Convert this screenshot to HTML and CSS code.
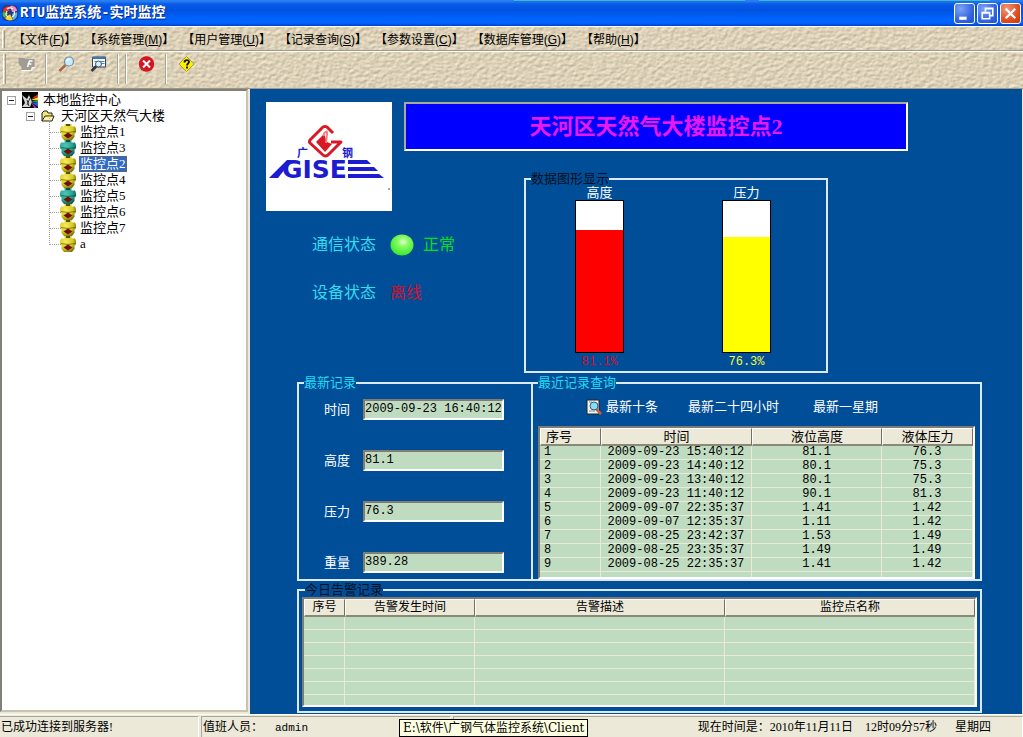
FILE: index.html
```html
<!DOCTYPE html>
<html lang="zh-CN">
<head>
<meta charset="utf-8">
<title>RTU监控系统-实时监控</title>
<link rel="stylesheet" href="styles.css">
</head>
<body>
<svg class="defs" width="0" height="0" aria-hidden="true">
  <defs>
    <radialGradient id="pot-y" cx="35%" cy="35%" r="75%"><stop offset="0" stop-color="#f6ee5a"/><stop offset=".6" stop-color="#d8c820"/><stop offset="1" stop-color="#6e6408"/></radialGradient>
    <radialGradient id="pot-t" cx="35%" cy="35%" r="75%"><stop offset="0" stop-color="#4cc8b4"/><stop offset=".6" stop-color="#25a08e"/><stop offset="1" stop-color="#0c5048"/></radialGradient>
    <symbol id="station" viewBox="0 0 16 16">
      <path d="M4.500 0h7v2.500H15L16 5v3.500l-1.500 1V13L12 16H4l-2.500-3V9.500L0 8.500V5l1-2.500h3.500z"/>
      <path d="M6 1h4" stroke="#222" stroke-width="1.500"/>
      <path d="M1 7.500q7 2 14 0" fill="none" stroke="#0006" stroke-width="1"/>
      <path d="M3.500 11.500L8 8.500l4.500 3L8 14.500z" fill="#6e1208"/>
    </symbol>
  </defs>
</svg>
<div class="window">
  <header class="title-bar">
    <div class="tab-edges"><span></span><span></span></div>
    <svg class="app-icon" viewBox="0 0 16 16">
      <rect width="16" height="16" rx="5" fill="#243a78"/>
      <path d="M1 7C1 3 5 0 8 2L7 6z" fill="#e83828"/><path d="M8 1c4-1 7 2 7 5l-5 1z" fill="#f08ac8"/>
      <path d="M15 7c1 4-1 7-4 8l-1-6z" fill="#58b8f0"/><path d="M11 15c-4 1-7 0-8-2l5-4z" fill="#f8d428"/>
      <path d="M3 13C1 12 0 10 1 7l5 1z" fill="#48c048"/><path d="M5 4c2-2 5-1 6 0M12 6c1 3 0 5-2 6M6 12C3 10 4 8 5 6" fill="none" stroke="#fff" stroke-width="1.200"/>
      <circle cx="8" cy="8" r="1.500" fill="#2038a0"/>
    </svg>
    <h1 class="title">RTU监控系统-实时监控</h1>
    <button class="win-btn" type="button" aria-label="最小化"><svg viewBox="0 0 18 18"><path d="M4 12h7v3H4z" fill="#fff"/></svg></button>
    <button class="win-btn" type="button" aria-label="还原"><svg viewBox="0 0 18 18"><path d="M7 7V4h7v7h-3M4 8h7v6H4zM4 8.500h7M7 4.500h7" fill="none" stroke="#fff" stroke-width="1.500"/></svg></button>
    <button class="win-btn win-close" type="button" aria-label="关闭"><svg viewBox="0 0 18 18"><path d="M4.500 4.500l9 9M13.500 4.500l-9 9" stroke="#fff" stroke-width="2.200"/></svg></button>
  </header>

  <div class="bars">
    <svg class="texture" width="100%" height="100%" aria-hidden="true">
      <filter id="emboss" x="0" y="0" width="100%" height="100%" color-interpolation-filters="sRGB">
        <feTurbulence type="fractalNoise" baseFrequency=".22 .3" numOctaves="2" seed="4"/>
        <feDiffuseLighting surfaceScale=".5" diffuseConstant="1.180" lighting-color="#e4d8be"><feDistantLight azimuth="235" elevation="55"/></feDiffuseLighting>
      </filter>
      <rect width="100%" height="100%" filter="url(#emboss)"/>
    </svg>
    <nav class="menu-bar">
      <span class="grip"></span>
      <button type="button">【文件(<u>F</u>)】</button>
      <button type="button">【系统管理(<u>M</u>)】</button>
      <button type="button">【用户管理(<u>U</u>)】</button>
      <button type="button">【记录查询(<u>S</u>)】</button>
      <button type="button">【参数设置(<u>C</u>)】</button>
      <button type="button">【数据库管理(<u>G</u>)】</button>
      <button type="button">【帮助(<u>H</u>)】</button>
    </nav>
    <div class="tool-bar">
      <span class="grip"></span>
      <button type="button" aria-label="登录" disabled><svg viewBox="0 0 16 16"><path d="M0 2h6l1 1h9v8h-3l-1 3H3v-3l-3-3z" fill="#a09c94"/><path d="M3 14.500h10l1-3h2" fill="none" stroke="#fff"/><path d="M9 11l2-6h3M9 8h4" fill="none" stroke="#fff" stroke-width="1.500"/></svg></button>
      <span class="sep"></span>
      <button type="button" aria-label="查询"><svg viewBox="0 0 16 16"><path d="M7 9l-6 6" stroke="#a8683c" stroke-width="2.500"/><circle cx="10.500" cy="5.500" r="4.500" fill="#c8ecfc" stroke="#6c8cac" stroke-width="1.200"/><path d="M8 5a3 3 0 0 1 3-2" fill="none" stroke="#fff" stroke-width="1.500"/></svg></button>
      <button type="button" aria-label="记录查询"><svg viewBox="0 0 16 16"><path d="M2 1h13v10H2z" fill="#f2f8fc" stroke="#34465c"/><path d="M2 1h13v2H2z" fill="#3c78b0"/><path d="M4 5.500h10M10 7.500h4" stroke="#6488a8"/><path d="M6 10l-5 5" stroke="#33333b" stroke-width="2.500"/><circle cx="8" cy="8" r="3" fill="#d4f0fc" stroke="#445668"/></svg></button>
      <span class="sep"></span><span class="sep"></span>
      <button type="button" aria-label="退出"><svg viewBox="0 0 16 16"><circle cx="8" cy="8" r="7.700" fill="#d41420"/><path d="M4.500 4.500l7 7M11.500 4.500l-7 7" stroke="#fff" stroke-width="2"/></svg></button>
      <span class="sep"></span>
      <button type="button" aria-label="帮助"><svg viewBox="0 0 16 16"><path d="M8 .5L15.500 8 8 15.500.5 8z" fill="#fcf008" stroke="#b0a020"/><path d="M6 6.500c0-3 4.500-3 4.500-.5C10.500 7.500 8.500 7.500 8.500 9.500M8.500 10.500v2" fill="none" stroke="#111" stroke-width="1.800"/></svg></button>
    </div>
  </div>

  <main class="main">
    <aside class="tree-pane">
      <ul class="tree">
        <li>
          <div class="node"><button class="expander" type="button" aria-label="折叠"></button><svg class="icon root-icon" viewBox="0 0 16 16"><path d="M0 0h16v16H0z" fill="#000"/><path d="M0 3l5 4 2-4 3 7-2 5H0l3-4z" fill="#d4d4d4"/><path d="M5 8l2 6M8 6l-3 7" stroke="#333"/><path d="M9 7l7-5v3z" fill="#e82818"/><path d="M9 8l7-3v3z" fill="#f8d020"/><path d="M9 9l7-1v3z" fill="#30a840"/><path d="M9 10l7 1v4z" fill="#3058e0"/><path d="M9 10l6 6h-3z" fill="#a030c0"/></svg><span class="label">本地监控中心</span></div>
          <ul>
            <li>
              <div class="node"><button class="expander" type="button" aria-label="折叠"></button><svg class="icon" viewBox="0 0 16 16"><path d="M1 13V5l2-2h3l1 2h4v3" fill="#f4e878" stroke="#222"/><path d="M1 13l3-5h9l-2 5z" fill="#fcf4a0" stroke="#222"/></svg><span class="label">天河区天然气大楼</span></div>
              <ul class="stations">
                <li class="node"><svg class="icon" fill="url(#pot-y)"><use href="#station"/></svg><span class="label">监控点1</span></li>
                <li class="node"><svg class="icon" fill="url(#pot-t)"><use href="#station"/></svg><span class="label">监控点3</span></li>
                <li class="node"><svg class="icon" fill="url(#pot-y)"><use href="#station"/></svg><span class="label selected">监控点2</span></li>
                <li class="node"><svg class="icon" fill="url(#pot-y)"><use href="#station"/></svg><span class="label">监控点4</span></li>
                <li class="node"><svg class="icon" fill="url(#pot-t)"><use href="#station"/></svg><span class="label">监控点5</span></li>
                <li class="node"><svg class="icon" fill="url(#pot-y)"><use href="#station"/></svg><span class="label">监控点6</span></li>
                <li class="node"><svg class="icon" fill="url(#pot-y)"><use href="#station"/></svg><span class="label">监控点7</span></li>
                <li class="node"><svg class="icon" fill="url(#pot-y)"><use href="#station"/></svg><span class="label">a</span></li>
              </ul>
            </li>
          </ul>
        </li>
      </ul>
    </aside>

    <section class="panel">
      <div class="overview">
        <svg class="logo" viewBox="0 0 126 109" role="img" aria-label="广钢 GISE">
          <path fill="#fff" d="M0 0h126v109H0z"/>
          <path d="M67 31L61 25Q59 24 57 25L44 38Q43 40 44 41L57 53Q59 55 62 53L75 40H65" fill="none" stroke="#d81824" stroke-width="3" stroke-linejoin="round"/>
          <path d="M50 40l8-8 3 8 5 2-7 8z" fill="#d81824"/><path d="M57 34c2-6 5-5 4-2l-1 9" fill="none" stroke="#f08080" stroke-width="2"/>
          <text class="logo-cn" x="31" y="55">广</text><text class="logo-cn" x="76" y="55">钢</text>
          <path d="M3 76L21 58h5L12 76z" fill="#1c1cd0"/>
          <text class="logo-en" x="16" y="76">GISE</text>
          <path d="M82 58h19l4 4H82zM82 65h26l4 4H82zM82 72h31l5 4H82z" fill="#1c1cd0"/>
          <path d="M122 87h2" stroke="#555"/>
        </svg>
        <h2 class="banner">天河区天然气大楼监控点2</h2>
        <div class="states">
          <span class="state-name">通信状态</span>
          <svg class="lamp" viewBox="0 0 24 24"><defs><radialGradient id="lamp" cx="55%" cy="35%" r="60%"><stop offset="0" stop-color="#e8ffd8"/><stop offset=".35" stop-color="#8cfc68"/><stop offset="1" stop-color="#40ec30"/></radialGradient></defs><ellipse cx="12" cy="12" rx="11.500" ry="10.500" fill="url(#lamp)"/></svg>
          <span class="ok">正常</span>
          <span class="state-name">设备状态</span>
          <span class="bad">离线</span>
        </div>
        <fieldset class="charts">
          <legend>数据图形显示</legend>
          <div class="gauges">
            <div class="gauge"><span>高度</span><div class="tube"><div class="fill red" style="height:81.1%"></div></div><span class="pct-red">81.1%</span></div>
            <div class="gauge"><span>压力</span><div class="tube"><div class="fill yellow" style="height:76.3%"></div></div><span class="pct-yellow">76.3%</span></div>
          </div>
        </fieldset>
      </div>

      <div class="records">
        <fieldset class="latest">
          <legend class="cyan">最新记录</legend>
          <div class="fields">
            <label for="f-time">时间</label><input id="f-time" type="text" value="2009-09-23 16:40:12" readonly>
            <label for="f-height">高度</label><input id="f-height" type="text" value="81.1" readonly>
            <label for="f-press">压力</label><input id="f-press" type="text" value="76.3" readonly>
            <label for="f-weight">重量</label><input id="f-weight" type="text" value="389.28" readonly>
          </div>
        </fieldset>
        <fieldset class="recent">
          <legend class="cyan">最近记录查询</legend>
          <div class="queries">
            <button type="button"><svg viewBox="0 0 16 16"><path d="M1 1h12v14H1z" fill="#f4f4f4" stroke="#222"/><path d="M3 12h6M3 3h3" stroke="#889"/><path d="M10 10l5 5" stroke="#d0603c" stroke-width="2.500"/><circle cx="8" cy="7" r="4" fill="#88dcf4" stroke="#34607c"/></svg>最新十条</button>
            <button type="button">最新二十四小时</button>
            <button type="button">最新一星期</button>
          </div>
          <div class="sheet">
            <table class="grid recent-grid">
              <colgroup><col class="c-no"><col class="c-time"><col class="c-h"><col class="c-p"></colgroup>
              <thead><tr><th class="first">序号</th><th>时间</th><th>液位高度</th><th>液体压力</th></tr></thead>
              <tbody>
                <tr><td>1</td><td>2009-09-23 15:40:12</td><td>81.1</td><td>76.3</td></tr>
                <tr><td>2</td><td>2009-09-23 14:40:12</td><td>80.1</td><td>75.3</td></tr>
                <tr><td>3</td><td>2009-09-23 13:40:12</td><td>80.1</td><td>75.3</td></tr>
                <tr><td>4</td><td>2009-09-23 11:40:12</td><td>90.1</td><td>81.3</td></tr>
                <tr><td>5</td><td>2009-09-07 22:35:37</td><td>1.41</td><td>1.42</td></tr>
                <tr><td>6</td><td>2009-09-07 12:35:37</td><td>1.11</td><td>1.42</td></tr>
                <tr><td>7</td><td>2009-08-25 23:42:37</td><td>1.53</td><td>1.49</td></tr>
                <tr><td>8</td><td>2009-08-25 23:35:37</td><td>1.49</td><td>1.49</td></tr>
                <tr><td>9</td><td>2009-08-25 22:35:37</td><td>1.41</td><td>1.42</td></tr>
                <tr class="tail"><td></td><td></td><td></td><td></td></tr>
              </tbody>
            </table>
          </div>
        </fieldset>
      </div>

      <fieldset class="alarms">
        <legend>今日告警记录</legend>
        <div class="sheet">
          <table class="grid alarm-grid">
            <colgroup><col class="a-no"><col class="a-time"><col class="a-desc"><col class="a-name"></colgroup>
            <thead><tr><th>序号</th><th>告警发生时间</th><th>告警描述</th><th>监控点名称</th></tr></thead>
            <tbody>
              <tr><td></td><td></td><td></td><td></td></tr>
              <tr><td></td><td></td><td></td><td></td></tr>
              <tr><td></td><td></td><td></td><td></td></tr>
              <tr><td></td><td></td><td></td><td></td></tr>
              <tr><td></td><td></td><td></td><td></td></tr>
              <tr><td></td><td></td><td></td><td></td></tr>
              <tr class="tail"><td></td><td></td><td></td><td></td></tr>
            </tbody>
          </table>
        </div>
      </fieldset>
    </section>
  </main>

  <footer class="status-bar">
    <div class="cell link">已成功连接到服务器!</div>
    <div class="cell duty"><span>值班人员：</span><span class="mono">admin</span></div>
    <div class="cell clock"><span>现在时间是：2010年11月11日</span><span>12时09分57秒</span><span class="weekday">星期四</span></div>
    <div class="tip" role="tooltip">E:\软件\广钢气体监控系统\Client</div>
  </footer>
</div>
</body>
</html>
```
FILE: styles.css
```css
* { box-sizing: border-box; }
body {
  margin: 0;
  font: 12px/14px "Liberation Serif", "Noto Sans CJK SC", sans-serif;
  color: #000;
  background: #ece9d8;
}
button { font: inherit; color: inherit; border: 0; padding: 0; background: none; }
ul { list-style: none; margin: 0; padding: 0; }
.defs { position: absolute; }
.window { min-height: 100vh; display: flex; flex-direction: column; }

/* title bar */
.title-bar {
  position: relative;
  display: flex; align-items: center; gap: 2px;
  height: 26px; padding: 0 2px;
  background: linear-gradient(#2a80f0 0, #2a80f0 1px, #0a5ae8 4px, #0052e0 10px, #0062fc 18px, #0064ff 23px, #0040c8 26px);
}
.tab-edges { position: absolute; top: 0; right: 33px; width: 476px; display: flex; gap: 14px; }
.tab-edges span { flex: 1; height: 2px; background: #3cb4f0; border-bottom: 1px solid #1878c8; }
.app-icon { width: 16px; height: 16px; }
.title { flex: 1; margin: 0; color: #fff; font: bold 14px/20px "Liberation Mono", "Noto Sans CJK SC", monospace; text-shadow: 1px 1px 0 #0a2a80; }
.win-btn { width: 21px; height: 21px; border: 1px solid #fff; border-radius: 3px; background: radial-gradient(circle at 30% 25%, #7ea4f4, #3464e0 60%, #2450cc); }
.win-btn svg { display: block; width: 19px; height: 19px; }
.win-close { background: radial-gradient(circle at 30% 25%, #f09878, #e04c20 60%, #c83810); }

/* menu and tool bars */
.bars { position: relative; background: #dfd2ba; }
.texture { position: absolute; inset: 0; }
.menu-bar, .tool-bar { position: relative; display: flex; border-top: 1px solid #fff; border-bottom: 1px solid #9c9888; }
.menu-bar { height: 25px; padding: 2px 0 0 2px; gap: 8px; align-items: center; font-family: "Liberation Sans", "Noto Sans CJK SC", sans-serif; white-space: nowrap; }
.tool-bar { height: 38px; padding: 2px 3px 4px; }
.grip { width: 3px; border-left: 1px solid #fff; border-right: 1px solid #9c9888; align-self: stretch; }
.menu-bar .grip { height: 17px; align-self: center; }
.tool-bar .grip { margin-right: 4px; }
.tool-bar button { width: 32px; height: 20px; display: flex; justify-content: center; align-items: center; }
.tool-bar svg { width: 17px; height: 16px; }
.sep { width: 2px; margin: 0 3px; border-left: 1px solid #a8a290; border-right: 1px solid #fff; }

/* main area */
.main { flex: 1; display: flex; gap: 2px; }
.tree-pane { width: 248px; flex: none; padding: 1px 0; background: #fff; border: 2px solid #808074; border-right-color: #c8c4b0; border-bottom-color: #c8c4b0; margin-bottom: 2px; }
.tree { padding-left: 5px; font-size: 13px; line-height: 16px; }
.tree ul { padding-left: 19px; }
.node { display: flex; align-items: center; height: 16px; }
.expander { width: 9px; height: 9px; margin-right: 6px; border: 1px solid #a0a0a0; background: linear-gradient(#222, #222) center / 5px 1px no-repeat #fff; }
.icon { width: 16px; height: 16px; flex: none; margin-right: 3px; }
.root-icon { margin-right: 4px; }
.label { padding: 0 1px; line-height: 16px; }
.selected { background: #316ac5; color: #fff; outline: 1px dotted #806030; outline-offset: -1px; }
.tree .stations { padding-left: 34px; }
.stations .node { position: relative; }
.stations .node::before { content: ""; position: absolute; left: -11px; top: -8px; width: 11px; height: 16px; border-left: 1px dotted #a0a0a0; border-bottom: 1px dotted #a0a0a0; }

.panel { flex: 1; min-width: 0; padding: 13px 40px 0 16px; margin-right: 1px; background: #004e98; }
.overview { display: grid; grid-template-columns: 138px 120px 1fr; grid-template-rows: 70px 39px auto; }
.logo { grid-area: 1 / 1 / 3 / 2; width: 126px; height: 109px; }
.logo-cn { font: bold 11px "Noto Sans CJK SC", sans-serif; fill: #1c1cd0; }
.logo-en { font: bold 25px "DejaVu Sans", sans-serif; fill: #1c1cd0; }
.banner {
  grid-area: 1 / 2 / 2 / 4; align-self: start;
  margin: 0 74px 0 0; padding: 11px 0 10px; border: 2px solid #aca8a0; border-right-color: #fff; border-bottom-color: #fff;
  background: #00f; color: #e818f0; text-align: center;
  font: bold 22px/24px "Liberation Serif", "Noto Sans CJK SC", sans-serif;
}
.states {
  grid-area: 3 / 1 / 4 / 3; align-self: start;
  display: grid; grid-template-columns: 64px 24px auto; column-gap: 14px; row-gap: 24px; align-items: center;
  padding: 22px 0 0 46px; font-size: 16px; line-height: 24px;
}
.state-name { color: #30dcf0; }
.lamp { width: 24px; height: 24px; }
.ok { color: #00e020; margin-left: -5px; }
.bad { color: #d0102c; grid-column: 2 / 4; }

fieldset { min-width: 0; margin: 0; padding: 0; border: 2px solid #dce8f4; }
legend { padding: 0; margin-left: 5px; font-size: 13px; line-height: 14px; color: #001020; }
.cyan { color: #20dcf4; }

.charts { grid-area: 2 / 3 / 4 / 4; width: 66%; min-width: 304px; padding: 0 6px 2px 0; color: #fff; }
.gauges { display: flex; justify-content: space-around; }
.gauge { width: 49px; display: flex; flex-direction: column; font-size: 13px; line-height: 14px; text-align: center; }
.tube { height: 153px; border: 1px solid #000; background: #fff; display: flex; align-items: flex-end; margin-bottom: 2px; }
.fill { width: 100%; }
.red { background: #f00; }
.yellow { background: #ff0; }
.pct-red, .pct-yellow { font: 12px/14px "Liberation Mono", monospace; }
.pct-red { color: #d0102c; }
.pct-yellow { color: #f4fc40; }

.records { display: flex; margin: 3px 0 0 31px; }
.latest { flex: 234 0 234px; border-right: 0; }
.fields { display: grid; grid-template-columns: 26px 1fr; column-gap: 13px; row-gap: 30px; align-items: center; padding: 9px 27px 6px 25px; color: #fff; font-size: 13px; }
.fields input {
  width: 100%; height: 21px; padding: 0 0 2px 0; border: 2px solid #807c74; border-right-color: #fff; border-bottom-color: #fff;
  background: #c0dcc0; color: #000; font: 12px/14px "Liberation Mono", monospace;
}
.recent { flex: 451 1 451px; padding: 9px 5px 0; }
.recent legend { margin-left: 0; }
.queries { display: flex; align-items: center; height: 16px; margin-bottom: 11px; padding-left: 48px; gap: 30px; color: #fff; font-size: 13px; }
.queries button { display: flex; align-items: center; gap: 4px; white-space: nowrap; }
.queries button:last-child { margin-left: 4px; }
.queries svg { width: 16px; height: 16px; }

.sheet { border: 2px solid #807c74; border-right-color: #fff; border-bottom-color: #fff; background: #c0dcc0; }
.grid { width: 100%; table-layout: fixed; border-collapse: separate; border-spacing: 0; text-align: center; }
.grid th {
  padding: 0; height: 18px; line-height: 15px; font-weight: normal; font-size: 13px; background: #ece9d8;
  border-top: 1px solid #fff; border-left: 1px solid #fff; border-right: 1px solid #716f64; border-bottom: 2px solid #8c8878;
}
.grid td { padding: 0; height: 14px; line-height: 13px; font-family: "Liberation Mono", monospace; border-right: 1px solid #ece9d8; border-bottom: 1px solid #ece9d8; white-space: nowrap; }
.grid td:first-child { text-align: left; padding-left: 4px; }
.grid .first { text-align: left; padding-left: 5px; }
.grid .tail td { height: 5px; border-bottom: 0; }
.c-no { width: 14%; } .c-time { width: 35%; } .c-h { width: 30%; } .c-p { width: 21%; }

.alarms { margin: 2px 0 0 31px; padding: 0 3px 4px; }
.alarms legend { margin-left: 3px; }
.alarm-grid th { font-size: 12px; }
.alarm-grid td { height: 13px; }
.alarm-grid .tail td { height: 10px; }
.a-no { width: 41px; } .a-time { width: 130px; }

/* status bar */
.status-bar { position: relative; display: flex; gap: 2px; height: 23px; padding-top: 1px; border-top: 1px solid #fff; line-height: 20px; }
.cell { border-top: 1px solid #aca899; border-right: 1px solid #fff; white-space: nowrap; padding-left: 1px; }
.link { width: 199px; }
.duty { width: 250px; display: flex; gap: 12px; border-left: 1px solid #aca899; }
.duty .mono { font: 11px/22px "Liberation Mono", monospace; }
.clock { flex: 1; display: flex; justify-content: flex-end; gap: 12px; padding-right: 31px; border-left: 1px solid #aca899; }
.weekday { margin-left: 6px; }
.tip { position: absolute; left: 399px; top: 4px; padding: 0 3px; border: 1px solid #000; background: #ffffe1; font-family: "DejaVu Serif", "Noto Sans CJK SC", serif; line-height: 16px; white-space: nowrap; }
```
